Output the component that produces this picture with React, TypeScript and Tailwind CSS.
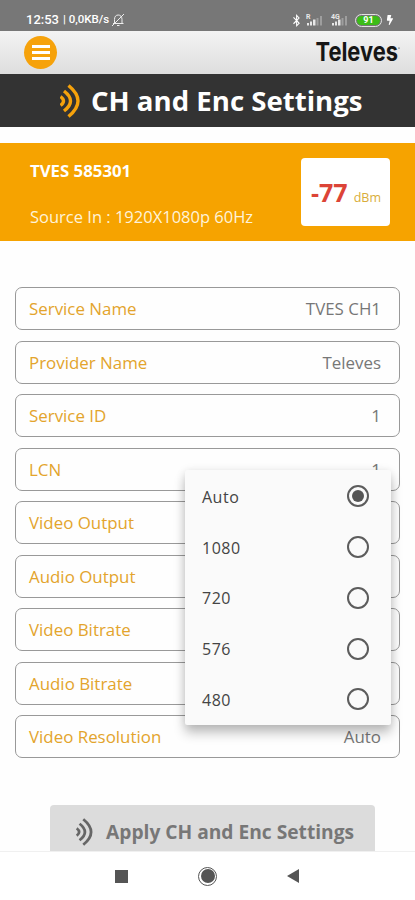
import { FaBluetoothB, FaBolt } from 'react-icons/fa';

const fields = [
  { label: 'Service Name', value: 'TVES CH1' },
  { label: 'Provider Name', value: 'Televes' },
  { label: 'Service ID', value: '1' },
  { label: 'LCN', value: '1' },
  { label: 'Video Output', value: '' },
  { label: 'Audio Output', value: '' },
  { label: 'Video Bitrate', value: '' },
  { label: 'Audio Bitrate', value: '' },
  { label: 'Video Resolution', value: 'Auto' },
];

const resolutions = ['Auto', '1080', '720', '576', '480'];

function Waves({ className }: { className: string }) {
  return (
    <svg viewBox="0 0 20 34" className={className} fill="none" stroke="currentColor" strokeWidth="3.4">
      <path d="M.5 12.5q6 4.5 0 9" />
      <path d="M4 7q13 10 0 20" />
      <path d="M8.5 1.5q19 15.5 0 31" />
    </svg>
  );
}

function Signal({ label }: { label: string }) {
  return (
    <svg viewBox="0 0 20 14" className="h-[14px] w-5" fill="#e8e8e8">
      <text x="1" y="6" fontSize="7" fontWeight="700" fontFamily="Roboto, sans-serif">{label}</text>
      <rect x="2" y="10" width="2" height="2.5" />
      <rect x="5" y="8.5" width="2" height="4" />
      <rect x="8" y="6.5" width="2.5" height="6" />
      <rect x="11.5" y="5" width="2" height="7.5" opacity=".35" />
      <rect x="15" y="3" width="2" height="9.5" opacity=".35" />
    </svg>
  );
}

function StatusBar() {
  return (
    <div className="flex h-[31px] items-center justify-between bg-[#777] pt-[9px] pr-[21px] pl-[26px] text-white">
      <div className="flex items-center gap-[2px] font-[Roboto,sans-serif] whitespace-nowrap">
        <span className="text-[13px] font-medium">12:53</span>
        <span className="ml-[2px] text-[11.5px] font-medium">| 0,0KB/s</span>
        <svg viewBox="0 0 14 14" className="size-[14px]" fill="none" stroke="#eee" strokeWidth="1">
          <path d="M2 10.5h10.5M3.5 10V6.5C3.5 3.5 5 2 7.2 2s3.8 1.5 3.8 4.5V10M6 12.5h2.5M1 13 13 1" />
        </svg>
      </div>
      <div className="flex items-center">
        <FaBluetoothB className="h-[13px] w-[15px]" />
        <div className="ml-px"><Signal label="R" /></div>
        <div className="ml-[5px]"><Signal label="4G" /></div>
        <div className="ml-[5px] flex h-[13px] w-[27px] rounded-full border-[1.5px] border-[#e4e4e4] p-px">
          <span className="flex-1 rounded-full bg-[#3cbc18] text-center font-[Roboto,sans-serif] text-[9px] leading-[9px] font-bold">91</span>
        </div>
        <FaBolt className="ml-[4px] h-[10px] w-[8px]" />
      </div>
    </div>
  );
}

function Header() {
  return (
    <header className="flex h-[43px] items-center justify-between bg-linear-to-b from-[#f3f3f3] to-[#dedede] pr-[15px] pl-6">
      <button aria-label="Menu" className="flex size-[33px] flex-col items-center justify-center gap-[3px] rounded-full bg-[#f6a20b]">
        <span className="h-[3px] w-[18px] bg-white" />
        <span className="h-[3px] w-[18px] bg-white" />
        <span className="h-[3px] w-[18px] bg-white" />
      </button>
      <svg viewBox="0 0 85 43" className="h-[43px] w-[85px] overflow-visible" fill="#161616">
        <text x="0.5" y="30" fontSize="26" fontWeight="700" fontFamily="Inter, 'Liberation Sans', sans-serif" textLength="82.5" lengthAdjust="spacingAndGlyphs">Televes</text>
        <circle cx="84" cy="17" r=".6" />
      </svg>
    </header>
  );
}

function ResolutionMenu() {
  return (
    <div className="absolute top-[470px] left-[185px] flex h-[255px] w-[206px] flex-col rounded-[2px] bg-[#fafafa] pt-px shadow-[0_8px_12px_rgba(0,0,0,0.24),0_1px_10px_rgba(0,0,0,0.1)]">
      {resolutions.map((item, i) => (
        <div key={item} className="flex h-[50.75px] items-center justify-between pr-[22px] pl-[17px] text-[16px] text-[#444]">
          <span className="pt-px tracking-[0.5px]">{item}</span>
          <span className="flex size-[22px] items-center justify-center rounded-full border-2 border-[#5c5c5c]">
            {i === 0 && <span className="size-3 rounded-full bg-[#555]" />}
          </span>
        </div>
      ))}
    </div>
  );
}

export default function App() {
  return (
    <div className="relative flex h-[900px] w-[415px] flex-col overflow-hidden bg-[#fefefe] font-['Open_Sans',sans-serif]">
      <StatusBar />
      <Header />
      <div className="flex h-[53px] items-center bg-[#333] pl-[60px] text-white">
        <Waves className="h-[34px] w-5 text-[#f6a20b]" />
        <h1 className="ml-[11px] text-[27.6px] font-bold whitespace-nowrap">CH and Enc Settings</h1>
      </div>

      <section className="mt-4 flex h-[98px] items-center justify-between bg-[#f6a300] pr-[25px] pl-[30px] text-white">
        <div className="flex flex-col gap-[22px] pt-[3px]">
          <span className="text-[16.8px] leading-6 font-bold">TVES 585301</span>
          <span className="text-[16.5px] leading-6 text-[#fff3d9]">Source In : 1920X1080p 60Hz</span>
        </div>
        <div className="flex h-[68px] w-[89px] items-baseline justify-center gap-[6px] rounded-[4px] bg-white pt-[16px] pl-px">
          <span className="text-[25px] font-bold text-[#dc4437]">-77</span>
          <span className="text-[12.5px] text-[#d9ad3a]">dBm</span>
        </div>
      </section>

      <main className="mt-[46px] flex flex-col gap-[10.5px] px-[15px]">
        {fields.map((field) => (
          <div key={field.label} className="flex h-[43px] items-center justify-between rounded-[7px] border border-[#999] pt-px pr-[18px] pl-[13px] text-[16.9px]">
            <span className="text-[#e3a42c]">{field.label}</span>
            <span className="text-[#777]">{field.value}</span>
          </div>
        ))}
      </main>

      <div className="mt-[47px] pl-[50px]">
        <button className="flex h-[46px] w-[325px] items-center rounded-t-[4px] bg-[#dcdcdc] pt-[7px] pl-[26px] text-[#777]">
          <Waves className="h-[28px] w-[17px] text-[#666]" />
          <span className="ml-[13px] pt-[2px] text-[19.2px] font-bold whitespace-nowrap">Apply CH and Enc Settings</span>
        </button>
      </div>

      <nav className="flex flex-1 items-center border-t border-[#f0f0f0] bg-white pl-[115px] text-[#555]">
        <span className="size-[13px] bg-current" />
        <span className="ml-[70px] flex size-[19px] items-center justify-center rounded-full border border-current">
          <span className="size-[14px] rounded-full bg-current" />
        </span>
        <svg viewBox="0 0 12 14" className="ml-[70px] h-[14px] w-3" fill="currentColor">
          <path d="M0 7 12 0v14z" />
        </svg>
      </nav>

      <ResolutionMenu />
    </div>
  );
}
